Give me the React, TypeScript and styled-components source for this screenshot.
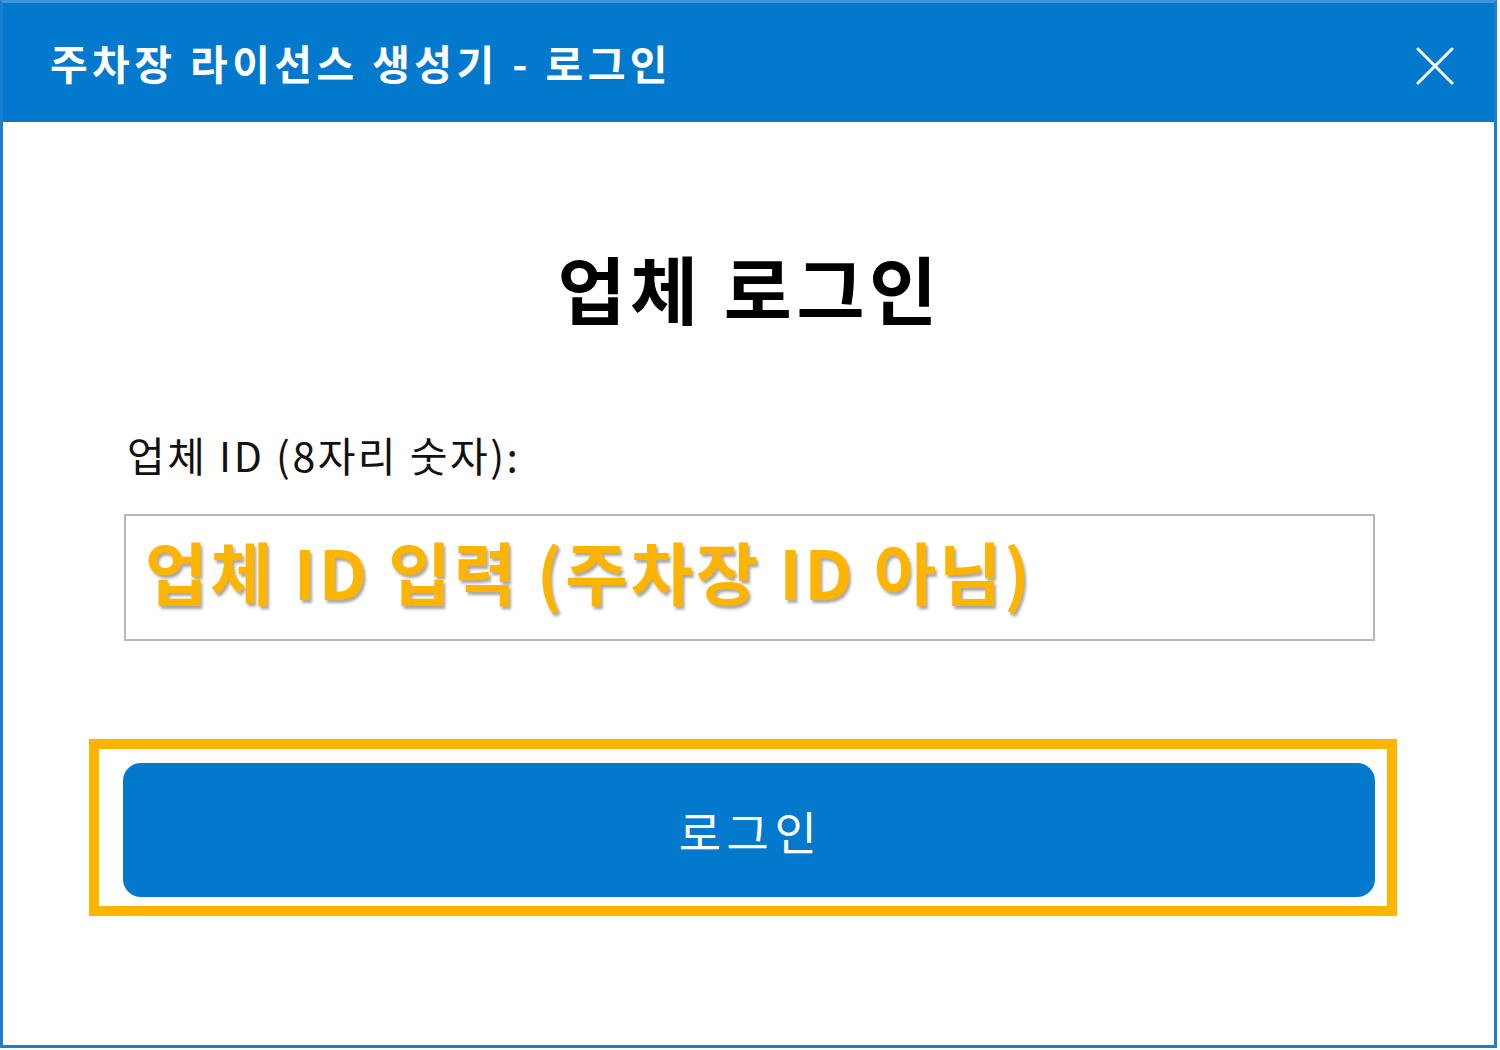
import React from 'react'
import styled, { createGlobalStyle } from 'styled-components'

const GlobalStyle = createGlobalStyle`
  html, body {
    margin: 0;
    padding: 0;
    background: #ffffff;
  }
  body {
    font-family: 'Noto Sans CJK KR', 'Noto Sans', sans-serif;
  }
  * {
    box-sizing: border-box;
  }
`

const BLUE = '#0279cc'
const ORANGE = '#ffb400'

const CloseIcon = ({ onClick }: { onClick?: () => void }) => (
  <CloseButton onClick={onClick} aria-label="닫기">
    <svg width="38" height="38" viewBox="0 0 38 38">
      <path d="M2 2 L36 36 M36 2 L2 36" stroke="#ffffff" strokeWidth="3" strokeLinecap="round" />
    </svg>
  </CloseButton>
)

export default function App(): JSX.Element {
  const [companyId, setCompanyId] = React.useState('')

  return (
    <>
      <GlobalStyle />
      <Window>
        <TitleBar>
          <Title>주차장 라이선스 생성기 - 로그인</Title>
          <CloseIcon />
        </TitleBar>
        <Body>
          <Heading>업체 로그인</Heading>
          <Label htmlFor="company-id">업체 ID (8자리 숫자):</Label>
          <Field
            id="company-id"
            value={companyId}
            onChange={e => setCompanyId(e.target.value)}
            placeholder="업체 ID 입력 (주차장 ID 아님)"
          />
          <Highlight>
            <LoginButton type="button">로그인</LoginButton>
          </Highlight>
        </Body>
      </Window>
    </>
  )
}

const Window = styled.div`
  width: 1497px;
  height: 1048px;
  border: 3px solid #1a7fd2;
  border-top-color: #3f95dc;
  display: flex;
  flex-direction: column;
  background: #ffffff;
`

const TitleBar = styled.div`
  height: 119px;
  background: ${BLUE};
  display: flex;
  align-items: center;
  justify-content: space-between;
  padding: 0 40px 0 47px;
  flex-shrink: 0;
`

const Title = styled.h1`
  margin: 0;
  color: #ffffff;
  font-size: 41px;
  font-weight: 700;
  line-height: 1;
  letter-spacing: 4.4px;
`

const CloseButton = styled.button`
  border: none;
  background: transparent;
  padding: 0;
  margin-top: 6px;
  display: flex;
  cursor: pointer;
`

const Body = styled.div`
  display: flex;
  flex-direction: column;
  padding: 128px 119px 0 121px;
`

const Heading = styled.h2`
  margin: 0;
  align-self: center;
  font-size: 74px;
  font-weight: 700;
  line-height: 1;
  color: #000000;
  letter-spacing: 4.5px;
`

const Label = styled.label`
  margin-top: 110px;
  padding-left: 3px;
  font-size: 41px;
  font-weight: 400;
  line-height: 1;
  color: #111111;
  letter-spacing: 2.5px;
`

const Field = styled.input`
  margin-top: 39px;
  width: 1251px;
  height: 127px;
  border: 2px solid #b6b6bc;
  padding: 10px 0 0 19px;
  font-family: 'Noto Sans CJK KR', 'Noto Sans', sans-serif;
  font-size: 40px;
  outline: none;
  background: #ffffff;

  &::placeholder {
    color: ${ORANGE};
    opacity: 1;
    font-size: 68px;
    font-weight: 700;
    letter-spacing: 2.7px;
    text-shadow: 2px 3px 3px rgba(0, 0, 0, 0.35);
  }
`

const Highlight = styled.div`
  margin-top: 98px;
  margin-left: -35px;
  width: 1308px;
  height: 177px;
  border: 10px solid ${ORANGE};
  padding: 14px 12px 9px 24px;
  display: flex;
`

const LoginButton = styled.button`
  flex: 1;
  border: none;
  border-radius: 18px;
  background: ${BLUE};
  color: #ffffff;
  font-family: 'Noto Sans CJK KR', 'Noto Sans', sans-serif;
  font-size: 46px;
  font-weight: 400;
  letter-spacing: 5.5px;
  padding-left: 9px;
  cursor: pointer;
`
